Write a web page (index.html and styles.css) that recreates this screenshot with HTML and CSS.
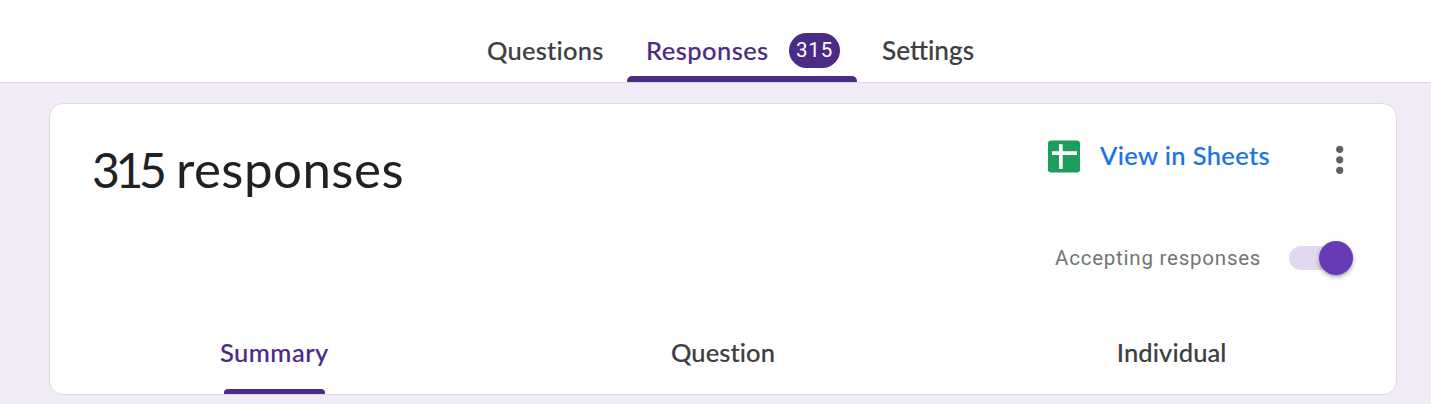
FILE: index.html
```html
<!DOCTYPE html>
<html lang="en">
<head>
<meta charset="utf-8">
<title>Form responses</title>
<link rel="stylesheet" href="styles.css">
</head>
<body>
<nav class="topbar">
  <a class="tab tab-questions"><span class="label">Questions</span></a>
  <a class="tab tab-responses active"><span class="label">Responses</span><span class="badge">315</span></a>
  <a class="tab tab-settings"><span class="label">Sett&zwnj;ings</span></a>
</nav>
<main class="card">
  <header class="card-head">
    <h1 class="title"><span class="count">315</span> responses</h1>
    <div class="controls">
      <div class="actions">
        <a class="sheets">
          <svg class="sheets-icon" width="32" height="33" viewBox="0 0 32 33"><rect y=".5" width="32" height="32" rx="3.2" fill="#1e9e5d"/><path d="M4 11.3h25v3.6H14.7V29H11V14.9H4zM11 4.3h3.7v8H11z" fill="#fff"/></svg>
          <span class="sheets-label">View in Sheets</span>
        </a>
        <svg class="more" width="8" height="30" viewBox="0 0 8 30" fill="#5f6368"><circle cx="3.7" cy="4.3" r="3.6"/><circle cx="3.7" cy="14.8" r="3.6"/><circle cx="3.7" cy="25.3" r="3.6"/></svg>
      </div>
      <div class="accepting">
        <span class="accepting-label">Accepting responses</span>
        <span class="switch"><span class="knob"></span></span>
      </div>
    </div>
  </header>
  <div class="views">
    <a class="view selected"><span class="summary">Summary</span></a>
    <a class="view"><span class="question">Question</span></a>
    <a class="view"><span class="individual">Individual</span></a>
  </div>
</main>
</body>
</html>
```
FILE: styles.css
```css
* { box-sizing: border-box; }
body {
  margin: 0;
  height: 404px;
  overflow: hidden;
  background: #f0ebf6;
  color: #3c4043;
  font-family: Lato, sans-serif;
}
.topbar {
  display: flex;
  height: 83px;
  padding-left: 463px;
  background: #fff;
  border-bottom: 1px solid #dadce0;
}
.tab {
  display: flex;
  align-items: center;
  height: 82px;
  padding-top: 19px;
  font-size: 25.5px;
  font-weight: 500;
  white-space: nowrap;
}
.label { padding-bottom: 2px; -webkit-text-stroke: .15px currentColor; }
.tab-questions { width: 164px; padding-left: 24px; letter-spacing: .25px; }
.tab-responses {
  width: 230px;
  padding: 19px 17px 0 19px;
  justify-content: space-between;
  letter-spacing: .45px;
}
.tab-settings { padding-left: 25px; font-size: 26.2px; }
.active { position: relative; color: #4c2b87; }
.active::after {
  content: "";
  position: absolute;
  left: 0;
  right: 0;
  bottom: 0;
  height: 6px;
  border-radius: 5px 5px 0 0;
  background: #4c2b87;
}
.badge {
  width: 51px;
  height: 35px;
  border-radius: 18px;
  background: #4c2b87;
  color: #fff;
  font: 400 20.5px/35px Roboto, sans-serif;
  letter-spacing: .8px;
  text-align: center;
}
.card {
  width: 1348px;
  height: 292px;
  margin: 20px 0 0 49px;
  background: #fff;
  border: 1px solid #dadce0;
  border-radius: 14px;
}
.card-head {
  display: flex;
  justify-content: space-between;
  height: 208px;
  padding: 34px 43px 0 42px;
}
.title {
  margin: 0;
  color: #202124;
  font-size: 51px;
  font-weight: 400;
  line-height: 62px;
  letter-spacing: .5px;
  white-space: nowrap;
}
.count { font-size: 48px; letter-spacing: -4.4px; }
.controls { width: 305px; padding-top: 2px; }
.actions { display: flex; justify-content: space-between; height: 92px; padding-right: 9px; }
.sheets { display: flex; gap: 20px; color: #1a73e8; font-size: 25.5px; font-weight: 500; line-height: 31px; letter-spacing: .35px; white-space: nowrap; }
.sheets-label { -webkit-text-stroke: .15px currentColor; }
.more { margin-top: 5px; }
.accepting { display: flex; align-items: center; justify-content: space-between; height: 52px; padding-left: 7px; }
.accepting-label { color: #70757a; font: 400 20.5px/28px Roboto, sans-serif; letter-spacing: .77px; white-space: nowrap; }
.switch { display: flex; align-items: center; justify-content: flex-end; width: 64px; height: 24px; border-radius: 12px; background: #e1d8ef; }
.knob { width: 34px; height: 34px; flex: none; border-radius: 50%; background: #673ab7; box-shadow: 0 2px 4px rgba(0,0,0,.35); }
.views { display: grid; grid-template-columns: repeat(3, 1fr); height: 82px; }
.view { display: flex; justify-content: center; padding-top: 24px; font-size: 25.5px; font-weight: 500; line-height: 32px; -webkit-text-stroke: .15px currentColor; }
.summary { letter-spacing: .5px; }
.question { letter-spacing: .1px; }
.individual { letter-spacing: .1px; }
.selected { position: relative; color: #4c2b87; }
.selected::after {
  content: "";
  position: absolute;
  left: 174px;
  bottom: 0;
  width: 101px;
  height: 5px;
  border-radius: 4px 4px 0 0;
  background: #4c2b87;
}
```
